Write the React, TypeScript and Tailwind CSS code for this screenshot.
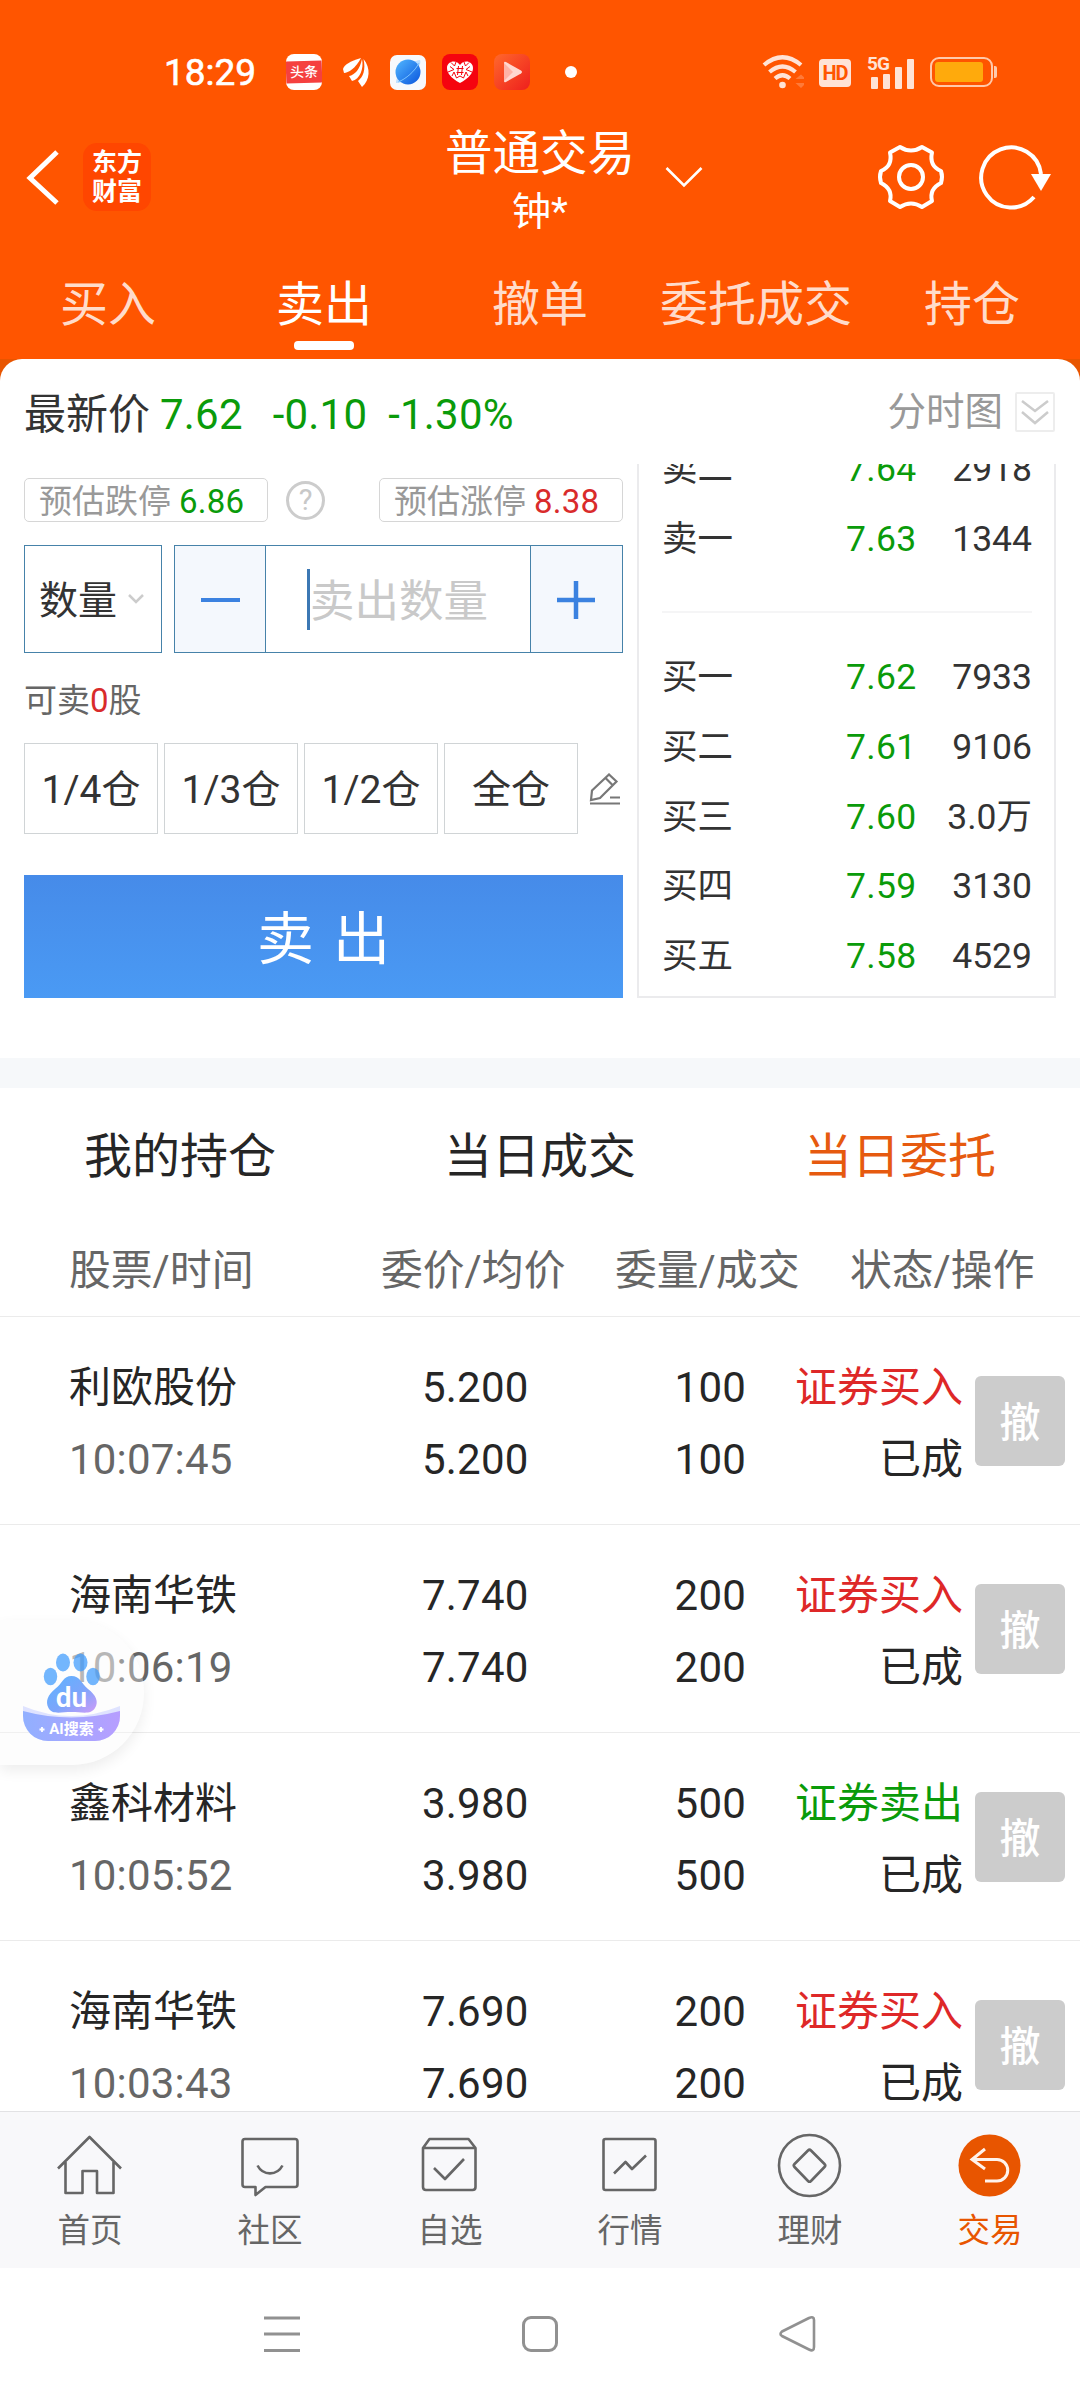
import type { ReactNode } from 'react'
import clsx from 'clsx'

const ACTIONS = ['买入', '卖出', '撤单', '委托成交', '持仓']

const ASKS = [
  { label: '卖二', price: '7.64', volume: '2918' },
  { label: '卖一', price: '7.63', volume: '1344' },
]

const BIDS = [
  { label: '买一', price: '7.62', volume: '7933' },
  { label: '买二', price: '7.61', volume: '9106' },
  { label: '买三', price: '7.60', volume: '3.0万' },
  { label: '买四', price: '7.59', volume: '3130' },
  { label: '买五', price: '7.58', volume: '4529' },
]

const POSITIONS = ['1/4仓', '1/3仓', '1/2仓', '全仓']

const ORDERS = [
  { name: '利欧股份', time: '10:07:45', price: '5.200', amount: '100', side: 'buy' },
  { name: '海南华铁', time: '10:06:19', price: '7.740', amount: '200', side: 'buy' },
  { name: '鑫科材料', time: '10:05:52', price: '3.980', amount: '500', side: 'sell' },
  { name: '海南华铁', time: '10:03:43', price: '7.690', amount: '200', side: 'buy' },
]

export default function App() {
  return (
    <div className="relative flex h-[2400px] w-[1080px] flex-col overflow-hidden bg-white font-[Roboto,'Noto_Sans_CJK_SC',sans-serif] text-[#262626]">
      <header className="h-[359px] shrink-0 bg-[#ff5500] text-white">
        <StatusBar />
        <TitleBar />
        <nav className="grid h-[125px] grid-cols-5">
          {ACTIONS.map((label) => {
            const active = label === '卖出'
            return (
              <div key={label} className="flex flex-col items-center pt-[39px]">
                <span className={clsx('text-[48px] leading-[64px] whitespace-nowrap', !active && 'text-[#ffdccb]')}>
                  {label}
                </span>
                {active && <span className="mt-[4px] h-[9px] w-[60px] rounded-[4px] bg-white" />}
              </div>
            )
          })}
        </nav>
      </header>

      <div className="shrink-0 bg-[#e85500]">
        <TradePanel />
      </div>
      <div className="h-[30px] shrink-0 bg-[#f6f8fa]" />

      <div className="grid h-[134px] shrink-0 grid-cols-3 items-center pt-[4px] text-center text-[48px]">
        <span>我的持仓</span>
        <span>当日成交</span>
        <span className="text-[#e65a0f]">当日委托</span>
      </div>
      <OrderTable />
      <BottomNav />
      <SystemBar />
      <FloatingSearch />
    </div>
  )
}

function StatusBar() {
  return (
    <div className="flex h-[120px] items-center pt-[24px] pl-[164px]">
      <span className="w-[122px] pt-[2px] text-[37px] leading-[44px] [-webkit-text-stroke:0.6px_white]">18:29</span>
      <div className="flex items-center gap-[16px]">
        <div className="flex h-[36px] w-[36px] flex-col justify-center overflow-hidden rounded-[8px] bg-white">
          <span className="-rotate-2 bg-[#f5403f] text-center text-[14px] leading-[22px] font-medium">头条</span>
        </div>
        <svg className="h-[36px] w-[36px]" viewBox="0 0 36 36" fill="#fff">
          <path d="M23 4C12 7 6 11 5 15L6 19C10 19 18 14 23 4Z" />
          <path d="M24 5C22 15 17 21 11 22L14 27C22 25 26 15 24 5Z" />
          <path d="M25.500 5C28 16 25 23 20 27L24 33C32 26 33 14 25.500 5Z" />
        </svg>
        <svg className="h-[36px] w-[36px]" viewBox="0 0 36 36">
          <defs>
            <linearGradient id="planet" x1="0" y1="0" x2="1" y2="1">
              <stop offset="0" stopColor="#52b7ff" />
              <stop offset="1" stopColor="#0a55dd" />
            </linearGradient>
          </defs>
          <rect y="1" width="36" height="35" rx="7" fill="#f7f9fc" />
          <path d="M6 29C5 22 20 7 30 6C33 12 17 30 6 29Z" fill="#bfe0ff" />
          <circle cx="18" cy="18" r="12.500" fill="url(#planet)" />
          <path d="M8 28C16 25 25 17 29 9" fill="none" stroke="#7cc4ff" strokeWidth="1" />
        </svg>
        <svg className="h-[36px] w-[36px]" viewBox="0 0 36 36">
          <rect width="36" height="36" rx="8" fill="#f5040f" />
          <path d="M18 29C9 24 5 19 5 14C5 7 14 5 18 11C22 5 31 7 31 14C31 19 27 24 18 29Z" fill="#fff" />
          <path
            d="M14.500 14.500H21.500M14.500 18.500H21.500M16.500 12L15.500 21M20.500 12L19.500 21M6 18L12 15.500L8 12.500M30 18L24 15.500L28 12.500M9 8.500L12.500 12L14 8M27 8.500L23.500 12L22 8M10 22L12 18L14.500 24L18 22L21.500 24L24 18L26 22"
            fill="none"
            stroke="#f5040f"
            strokeWidth="1"
          />
        </svg>
        <svg className="h-[36px] w-[36px]" viewBox="0 0 36 36">
          <defs>
            <linearGradient id="video" x1="0" y1="0" x2="1" y2="1">
              <stop offset="0" stopColor="#ff682c" />
              <stop offset="1" stopColor="#ee1f1d" />
            </linearGradient>
          </defs>
          <rect width="36" height="36" rx="8" fill="url(#video)" />
          <path d="M10 9Q10 7 12 8L27 16.500Q29 18 27 19.500L12 28Q10 29 10 27Z" fill="#ffd7d0" />
          <path d="M10 9L19 18L10 27Z" fill="#ffb3a6" />
        </svg>
      </div>
      <span className="ml-[35px] h-[12px] w-[12px] rounded-full bg-white" />

      <svg className="ml-[185px] h-[36px] w-[42px]" viewBox="0 0 42 36" fill="none" stroke="#ffe3d6" strokeWidth="4.200">
        <path d="M2 11Q20.500-4.500 39 11M7.500 18Q20.500 7 33.500 18M13 24.500Q20.500 18 28 24.500" />
        <circle cx="20.500" cy="31" r="3.300" fill="#ffe3d6" stroke="none" />
        <path d="M33.500 25L39 20.500L44 25ZM33.500 29L39 34L44 29Z" fill="#ff7a38" stroke="none" />
      </svg>
      <span className="mt-[2px] ml-[15px] flex h-[28px] w-[32px] items-center justify-center rounded-[4px] bg-[#ffe3d6] text-[20px] font-bold tracking-[-1px] text-[#ff5500]">
        HD
      </span>
      <div className="relative ml-[16px] h-[34px] w-[47px]">
        <span className="absolute top-[-1px] left-0 text-[19px] leading-[19px] font-bold tracking-[-1px] text-[#ffe3d6]">5G</span>
        <div className="flex h-full items-end gap-[5px] pl-[4px]">
          <span className="h-[12px] w-[7px] rounded-[1px] bg-[#ffe3d6]" />
          <span className="h-[15px] w-[7px] rounded-[1px] bg-[#ffe3d6]" />
          <span className="h-[22px] w-[7px] rounded-[1px] bg-[#ffe3d6]" />
          <span className="h-[30px] w-[7px] rounded-[1px] bg-[#ffe3d6]" />
        </div>
      </div>
      <div className="ml-[16px] flex h-[30px] w-[63px] items-center rounded-[9px] border-2 border-[#ffc9ab] pl-[3px]">
        <span className="h-[20px] w-[48px] rounded-[3px] bg-[#ffaa0c]" />
      </div>
      <span className="ml-px h-[12px] w-[3px] rounded-r-[2px] bg-[#ffc9ab]" />
    </div>
  )
}

function TitleBar() {
  return (
    <div className="grid h-[114px] grid-cols-[1fr_188px_1fr] grid-rows-[114px] items-center">
      <div className="flex items-center pl-[26px]">
        <svg className="h-[56px] w-[34px]" viewBox="0 0 34 56" fill="none" stroke="#fff" strokeWidth="5">
          <path d="M31 3L4 29L31 54" />
        </svg>
        <div className="ml-[23px] flex h-[68px] w-[68px] flex-col items-center justify-center rounded-[14px] bg-[#ff4600] text-[25px] leading-[29px] font-bold">
          <span>东方</span>
          <span>财富</span>
        </div>
      </div>
      <div className="flex h-[114px] flex-col items-center whitespace-nowrap">
        <span className="pt-[3px] text-[47.500px] leading-[62px]">普通交易</span>
        <span className="text-[39px] leading-[54px]">钟*</span>
      </div>
      <div className="flex items-center pl-[31px]">
        <svg className="h-[22px] w-[38px]" viewBox="0 0 38 22" fill="none" stroke="#fff" strokeWidth="2.600">
          <path d="M1.500 2L19 19.500L36.500 2" />
        </svg>
        <svg className="ml-[173px] h-[68px] w-[70px]" viewBox="0 0 70 68" fill="none" stroke="#fff" strokeWidth="4" strokeLinejoin="round">
          <path d="M24 4Q35 11 46 4L56 9.500Q53 23 65 28Q67 34 65 40Q53 46 56 58L46 64Q35 57 24 64L14 58Q17 46 5 40Q3 34 5 28Q17 23 14 9.500Z" />
          <circle cx="35" cy="34" r="12" />
        </svg>
        <svg className="ml-[32px] h-[68px] w-[74px]" viewBox="0 0 74 68" fill="none" stroke="#fff" strokeWidth="4">
          <path d="M56 54A30 30 0 1 1 63 31" />
          <path d="M53 31H73L63 48Z" fill="#fff" stroke="none" />
        </svg>
      </div>
    </div>
  )
}

function TradePanel() {
  return (
    <section className="h-[699px] rounded-t-[22px] bg-white">
      <div className="flex h-[105px] items-center pr-[25px] pl-[24px] text-[42px] text-[#0a9b0a]">
        <span className="pt-[5px] text-[#333]">最新价</span>
        <span className="ml-[10px] pt-[5px] tracking-[0.2px]">7.62</span>
        <span className="ml-[30px] pt-[5px] tracking-[0.2px]">-0.10</span>
        <span className="ml-[21px] pt-[5px] tracking-[0.2px]">-1.30%</span>
        <span className="mr-[12px] ml-auto pt-[1px] text-[38.500px] text-[#999]">分时图</span>
        <span className="flex h-[40px] w-[40px] items-center justify-center rounded-[2px] border-2 border-[#ededed]">
          <svg className="h-[28px] w-[28px]" viewBox="0 0 28 28" fill="none" stroke="#ccc" strokeWidth="2.500">
            <path d="M1 3L14 13L27 3M1 14L14 25L27 14" />
          </svg>
        </span>
      </div>

      <div className="flex pl-[24px]">
        <div className="w-[599px] pt-[14px]">
          <div className="flex h-[43px] items-center">
            <LimitBox label="预估跌停" value="6.86" valueClass="text-[#0a9b0a]" />
            <span className="mt-[2px] ml-[18px] flex h-[39px] w-[39px] items-center justify-center rounded-full border-[3px] border-[#ccc] text-[29px] text-[#c8c8c8]">
              ?
            </span>
            <LimitBox label="预估涨停" value="8.38" valueClass="text-[#d92b2b]" className="ml-auto" />
          </div>

          <div className="mt-[24px] flex h-[108px] gap-[12px]">
            <div className="flex w-[138px] items-center border border-[#4682a9] pl-[14px] text-[39px] text-[#333]">
              <span className="pt-[5px]">数量</span>
              <svg className="ml-[11px] h-[10px] w-[16px]" viewBox="0 0 16 10" fill="none" stroke="#ccc" strokeWidth="2.500">
                <path d="M1 1L8 8L15 1" />
              </svg>
            </div>
            <div className="flex flex-1 border border-[#4682a9]">
              <div className="flex w-[91px] items-center justify-center border-r border-[#4682a9] bg-[#f4f8fd]">
                <span className="mt-[2px] h-[4px] w-[39px] bg-[#3b82e0]" />
              </div>
              <div className="flex flex-1 items-center pl-[41px] text-[44.500px] text-[#c9c9c9]">
                <span className="h-[61px] w-[3px] bg-[#3c78b4]" />
                <span className="pt-[7px]">卖出数量</span>
              </div>
              <div className="flex w-[92px] items-center justify-center border-l border-[#4682a9] bg-[#f4f8fd] pt-[2px] pr-[2px]">
                <svg className="h-[38px] w-[38px]" viewBox="0 0 38 38" stroke="#3b82e0" strokeWidth="4.500">
                  <path d="M0 19H38M19 0V38" />
                </svg>
              </div>
            </div>
          </div>

          <div className="flex h-[90px] items-center pt-[5px] text-[33px] text-[#666]">
            可卖<span className="text-[#d92b2b]">0</span>股
          </div>

          <div className="flex h-[91px] items-center gap-[6px]">
            {POSITIONS.map((label) => (
              <span key={label} className="flex h-full w-[134px] items-center justify-center border border-[#d0d4d6] pt-[4px] text-[39px] text-[#333]">
                {label}
              </span>
            ))}
            <svg className="ml-[5px] h-[32px] w-[32px]" viewBox="0 0 32 32" fill="none" stroke="#777" strokeWidth="2.200">
              <path d="M2 27L3 17.500L20 1.500L27.500 8.500L11 25ZM16.500 5L23.500 12" />
              <path d="M1 30.500H31M21 24.500H31" />
            </svg>
          </div>

          <div className="mt-[41px] flex h-[123px] items-center justify-center bg-linear-to-b from-[#468be9] to-[#4a9af4] pt-[7px] text-[57px] text-white">
            <span>卖</span>
            <span className="ml-[19px]">出</span>
          </div>
        </div>

        <OrderBook />
      </div>
    </section>
  )
}

function LimitBox({ label, value, valueClass, className }: { label: string; value: string; valueClass: string; className?: string }) {
  return (
    <div className={clsx('flex h-[44px] w-[244px] items-center rounded-[5px] border border-[#d6d6d6] pt-[4px] pl-[14px] text-[33px] leading-[40px] whitespace-nowrap', className)}>
      <span className="text-[#999]">{label}</span>
      <span className={clsx('ml-[8px] tracking-[0.2px]', valueClass)}>{value}</span>
    </div>
  )
}

function OrderBook() {
  return (
    <div className="ml-[14px] h-[534px] w-[419px] overflow-hidden border-x-2 border-b-2 border-[#ebebed] pr-[22px] pl-[23px]">
      <div className="-mt-[31px]">
        {ASKS.map((q) => (
          <QuoteRow key={q.label} {...q} />
        ))}
      </div>
      <div className="mt-[39px] mb-[28px] h-[2px] bg-[#f5f5f6]" />
      {BIDS.map((q) => (
        <QuoteRow key={q.label} {...q} />
      ))}
    </div>
  )
}

function QuoteRow({ label, price, volume }: { label: string; price: string; volume: string }) {
  return (
    <div className="flex h-[69.600px] items-center pt-[4px] text-[35.500px] text-[#333]">
      <span className="w-[184px]">{label}</span>
      <span className="tracking-[0.3px] text-[#0a9b0a]">{price}</span>
      <span className="ml-auto">{volume}</span>
    </div>
  )
}

function OrderTable() {
  return (
    <section className="h-[889px] shrink-0 overflow-hidden text-[42px]">
      <div className="flex h-[95px] items-center border-b border-[#ebebeb] pt-[4px] pl-[69px] text-[41.800px] whitespace-nowrap text-[#666]">
        <span className="w-[312px]">股票/时间</span>
        <span className="w-[234px]">委价/均价</span>
        <span className="w-[235px]">委量/成交</span>
        <span>状态/操作</span>
      </div>
      {ORDERS.map((o) => (
        <div key={o.time} className="flex h-[208px] items-center border-b border-[#ebebeb] pr-[15px] pl-[69px] leading-[72px]">
          <div className="w-[353px] pt-[6px]">
            <p>{o.name}</p>
            <p className="tracking-[0.2px] text-[#666]">{o.time}</p>
          </div>
          <div className="w-[108px] pt-[6px] tracking-[0.2px]">
            <p>{o.price}</p>
            <p>{o.price}</p>
          </div>
          <div className="w-[216px] pt-[6px] text-right tracking-[0.2px]">
            <p>{o.amount}</p>
            <p>{o.amount}</p>
          </div>
          <div className="ml-auto pt-[6px] text-right">
            <p className={o.side === 'buy' ? 'text-[#de2828]' : 'text-[#0a9b0a]'}>
              {o.side === 'buy' ? '证券买入' : '证券卖出'}
            </p>
            <p>已成</p>
          </div>
          <span className="ml-[12px] flex h-[90px] w-[90px] items-center justify-center rounded-[6px] bg-[#ccc] pt-[5px] text-[41px] font-medium text-white">
            撤
          </span>
        </div>
      ))}
    </section>
  )
}

function NavItem({ label, active, children }: { label: string; active?: boolean; children: ReactNode }) {
  return (
    <div className={clsx('flex flex-col items-center pt-[19px]', active ? 'text-[#e85500]' : 'text-[#666]')}>
      <svg className="h-[68px] w-[68px]" viewBox="0 0 68 68" fill="none" stroke="currentColor" strokeWidth="2.600" strokeLinejoin="round">
        {children}
      </svg>
      <span className="mt-[12px] text-[32.500px] leading-[40px]">{label}</span>
    </div>
  )
}

function BottomNav() {
  return (
    <nav className="grid h-[157px] shrink-0 grid-cols-6 border-t border-[#e2e2e4] bg-[#f8f8fa]">
      <NavItem label="首页">
        <path d="M2 37.500L33.500 6L65 37.500M9.500 31V62H26.500V40H41V62H57.500V31" />
      </NavItem>
      <NavItem label="社区">
        <path d="M9 8H59Q61.500 8 61.500 10.500V53.500Q61.500 56 59 56H29.500L19.500 64V56H9Q6.500 56 6.500 53.500V10.500Q6.500 8 9 8Z" />
        <path d="M21.500 34.500C27 45 41 45 46.500 34.500" />
      </NavItem>
      <NavItem label="自选">
        <path d="M7 17L13.500 8H52.500L59.500 17V56Q59.500 59 56.500 59H10Q7 59 7 56ZM7 17H59.500M18 37L29 48L48 28" />
      </NavItem>
      <NavItem label="行情">
        <rect x="7.500" y="8" width="52" height="51" rx="2" />
        <path d="M18 42.500L29.500 31L36 38L50 24.500" />
      </NavItem>
      <NavItem label="理财">
        <circle cx="33.500" cy="34.500" r="30.500" />
        <path d="M32 19.500Q33.500 18 35 19.500L48.500 33Q50 34.500 48.500 36L35 50Q33.500 51.500 32 50L18.500 36Q17 34.500 18.500 33Z" />
      </NavItem>
      <NavItem label="交易" active>
        <circle cx="33.500" cy="34.500" r="31" fill="currentColor" stroke="none" />
        <path d="M29 18L16 28.500L29 38M16 28.500H41A10.700 10.700 0 0 1 41 50H29" stroke="#fff3ec" strokeWidth="3" strokeLinejoin="miter" />
      </NavItem>
    </nav>
  )
}

function SystemBar() {
  return (
    <div className="flex flex-1 items-center justify-center gap-[221px]">
      <svg className="h-[38px] w-[37px]" viewBox="0 0 37 38" stroke="#919191" strokeWidth="3">
        <path d="M0 3H36M0 19H36M0 35.500H36" />
      </svg>
      <span className="h-[36px] w-[36px] rounded-[9px] border-[3px] border-[#919191]" />
      <svg className="h-[38px] w-[37px]" viewBox="0 0 37 38" fill="none" stroke="#919191" strokeWidth="2.600">
        <path d="M3 16.500L30 3Q35 1 35 5V32Q35 37 30 34.500L3 21Q0 19 3 16.500Z" />
      </svg>
    </div>
  )
}

// Search shortcut that sits half transparent over the order list
function FloatingSearch() {
  return (
    <div className="absolute top-[1620px] left-0 flex h-[145px] w-[144px] items-center rounded-r-[72px] bg-[#f8f8f8]/35 pl-[23px] shadow-[0_6px_14px_rgba(0,0,0,0.07)]">
      <svg className="h-[97px] w-[97px]" viewBox="0 0 97 97">
        <defs>
          <linearGradient id="paw" x1="0" y1="0" x2="1" y2="1">
            <stop offset="0" stopColor="#5cb5ff" />
            <stop offset="0.550" stopColor="#7ca5fb" />
            <stop offset="1" stopColor="#cf9cf8" />
          </linearGradient>
          <linearGradient id="band" x1="0" y1="0" x2="1" y2="0">
            <stop offset="0" stopColor="#91b0ff" />
            <stop offset="1" stopColor="#b79eff" />
          </linearGradient>
          <clipPath id="tile">
            <rect width="97" height="97" rx="25" />
          </clipPath>
        </defs>
        <g clipPath="url(#tile)">
          <rect width="97" height="97" fill="#fff" fillOpacity="0.300" />
          <path d="M0 62Q48 82 97 62V97H0Z" fill="#dfe3ff" />
          <path d="M0 67Q48 80 97 67V97H0Z" fill="url(#band)" />
        </g>
        <g fill="#3d9afc" fillOpacity="0.720">
          <ellipse cx="27.500" cy="32.500" rx="6.700" ry="8.700" />
          <ellipse cx="40" cy="18.500" rx="7" ry="9" />
          <ellipse cx="57.500" cy="18.500" rx="7" ry="9" />
          <ellipse cx="70" cy="32.500" rx="6.700" ry="8.700" />
        </g>
        <path d="M48.500 32C57 32 58 39 65 45C73 51 76 58 72 64C68 71 59 68 48.500 68C38 68 29 71 25.500 64C22 57 25 51 32 45C40 39 40 32 48.500 32Z" fill="url(#paw)" />
        <text x="48.500" y="63" textAnchor="middle" fontSize="28" fontWeight="600" fill="#fff">du</text>
        <text x="48.500" y="90" textAnchor="middle" fontSize="15" fontWeight="700" fill="#fff">AI搜索</text>
        <path d="M16.500 85.500H21.500M19 83V88M75.500 85.500H80.500M78 83V88" stroke="#fff" strokeWidth="1.800" />
      </svg>
    </div>
  )
}
